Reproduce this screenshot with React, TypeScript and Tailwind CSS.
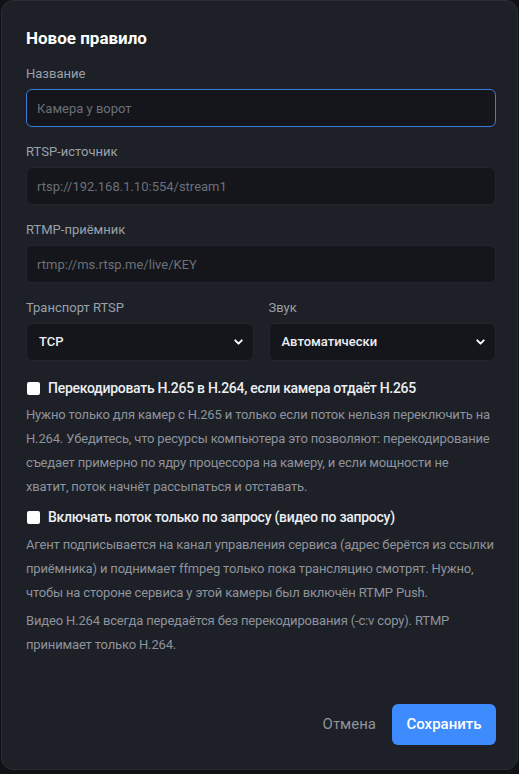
import { ChevronDown } from "lucide-react";

const Field = ({
  label,
  placeholder,
  focused,
}: {
  label: string;
  placeholder: string;
  focused?: boolean;
}) => (
  <div className="mb-4">
    <label className="block text-[13px] leading-[18px] text-[#9aa0aa] mb-1.5">
      {label}
    </label>
    <input
      placeholder={placeholder}
      className={
        focused
          ? "w-full h-[38px] rounded-md bg-[#14161b] border border-[#3b7ddd] px-2.5 text-[13px] text-[#e5e7eb] placeholder:text-[#6b7079] outline-none"
          : "w-full h-[38px] rounded-md bg-[#14161b] border border-[#23262d] px-2.5 text-[13px] text-[#e5e7eb] placeholder:text-[#6b7079] outline-none"
      }
    />
  </div>
);

const SelectBox = ({ label, value }: { label: string; value: string }) => (
  <div className="flex-1">
    <label className="block text-[13px] leading-[18px] text-[#9aa0aa] mb-1.5">
      {label}
    </label>
    <div className="relative h-[38px] rounded-md bg-[#14161b] border border-[#23262d] flex items-center px-3">
      <span className="text-[13px] font-medium text-[#eceef2]">{value}</span>
      <ChevronDown
        size={13}
        strokeWidth={3.5}
        className="absolute right-2 top-1/2 -translate-y-1/2 text-white"
      />
    </div>
  </div>
);

const Check = ({ label }: { label: string }) => (
  <label className="flex items-center gap-2 text-[14px] leading-[20px] font-medium tracking-[-0.28px] text-[#eceef2]">
    <span className="w-[13px] h-[13px] bg-white rounded-[2px] ml-px shrink-0" />
    {label}
  </label>
);

const Hint = ({ className, children }: { className: string; children: React.ReactNode }) => (
  <p className={`${className} text-[13px] leading-[24px] tracking-[-0.16px] text-[#8e939c]`}>
    {children}
  </p>
);

export default function App() {
  return (
    <div
      className="w-[519px] h-[774px] bg-[#0f1115] px-[1px] pb-[4px]"
      style={{ fontFamily: 'Roboto, "Noto Sans", sans-serif' }}
    >
      <div className="h-full flex flex-col rounded-xl bg-[#1d2027] border border-[#2a2d34] pl-[24px] pr-[21px] pt-[25px] pb-[24px]">
        <h2 className="text-[17px] leading-[24px] font-bold text-white mb-[15px]">
          Новое правило
        </h2>

        <Field label="Название" placeholder="Камера у ворот" focused />
        <Field label="RTSP-источник" placeholder="rtsp://192.168.1.10:554/stream1" />
        <Field label="RTMP-приёмник" placeholder="rtmp://ms.rtsp.me/live/KEY" />

        <div className="flex gap-[15px] mb-[17px]">
          <SelectBox label="Транспорт RTSP" value="TCP" />
          <SelectBox label="Звук" value="Автоматически" />
        </div>

        <Check label="Перекодировать H.265 в H.264, если камера отдаёт H.265" />
        <Hint className="mt-[5px]">
          Нужно только для камер с H.265 и только если поток нельзя переключить на
          H.264. Убедитесь, что ресурсы компьютера это позволяют: перекодирование
          съедает примерно по ядру процессора на камеру, и если мощности не
          <br />
          хватит, поток начнёт рассыпаться и отставать.
        </Hint>

        <div className="mt-[8px]">
          <Check label="Включать поток только по запросу (видео по запросу)" />
        </div>
        <Hint className="mt-[6px]">
          Агент подписывается на канал управления сервиса (адрес берётся из ссылки
          приёмника) и поднимает ffmpeg только пока трансляцию смотрят. Нужно,
          чтобы на стороне сервиса у этой камеры был включён RTMP Push.
        </Hint>
        <Hint className="mt-[4px]">
          Видео H.264 всегда передаётся без перекодирования (-c:v copy). RTMP
          принимает только H.264.
        </Hint>

        <div className="mt-auto flex justify-end items-center gap-4">
          <button className="text-[15px] text-[#8e939c]">Отмена</button>
          <button className="h-[41px] w-[104px] rounded-md bg-[#3d8bfd] text-white text-[15px] font-medium">
            Сохранить
          </button>
        </div>
      </div>
    </div>
  );
}
